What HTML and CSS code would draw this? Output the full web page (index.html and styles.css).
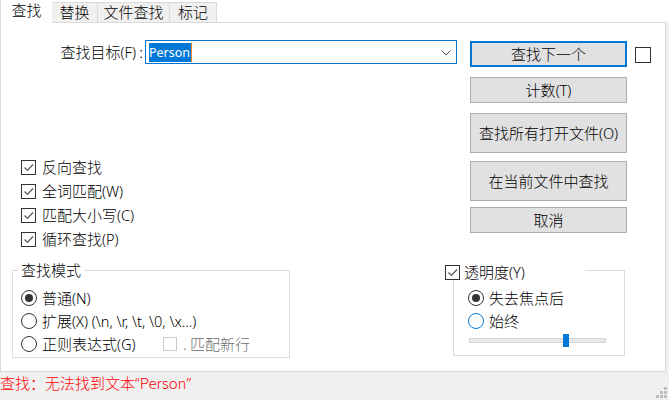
FILE: index.html
```html
<!DOCTYPE html>
<html lang="zh-CN">
<head>
<meta charset="utf-8">
<title>查找</title>
<link rel="stylesheet" href="styles.css">
</head>
<body>
<div class="tabs">
  <div class="tab active">查找</div>
  <div class="tab w46">替换</div>
  <div class="tab w72">文件查找</div>
  <div class="tab w47">标记</div>
</div>
<div class="main">
  <div class="panel">
    <div class="top">
      <div class="left">
        <div class="find-row">
          <label class="find-label">查找目标<span class="k">(F)</span> :</label>
          <div class="combo">
            <span class="sel">Person</span><span class="caret"></span>
            <svg class="chev" width="10" height="6" viewBox="0 0 10 6"><path d="M0.5 0.5 L5 5 L9.5 0.5" fill="none" stroke="#555" stroke-width="1"/></svg>
          </div>
        </div>
        <div class="checks">
          <div class="chk"><span class="box"><svg width="13" height="13" viewBox="0 0 13 13"><path d="M2.5 6.5 L5.5 9.5 L11 3.5" fill="none" stroke="#555" stroke-width="1.2"/></svg></span>反向查找</div>
          <div class="chk"><span class="box"><svg width="13" height="13" viewBox="0 0 13 13"><path d="M2.5 6.5 L5.5 9.5 L11 3.5" fill="none" stroke="#555" stroke-width="1.2"/></svg></span>全词匹配<span class="k">(W)</span></div>
          <div class="chk"><span class="box"><svg width="13" height="13" viewBox="0 0 13 13"><path d="M2.5 6.5 L5.5 9.5 L11 3.5" fill="none" stroke="#555" stroke-width="1.2"/></svg></span>匹配大小写<span class="k">(C)</span></div>
          <div class="chk"><span class="box"><svg width="13" height="13" viewBox="0 0 13 13"><path d="M2.5 6.5 L5.5 9.5 L11 3.5" fill="none" stroke="#555" stroke-width="1.2"/></svg></span>循环查找<span class="k">(P)</span></div>
        </div>
      </div>
      <div class="right">
        <div class="btn-row">
          <div class="btn default">查找下一个</div>
          <span class="box big"></span>
        </div>
        <div class="btn b2">计数<span class="k">(T)</span></div>
        <div class="btn b3 tall">查找所有打开文件<span class="k">(O)</span></div>
        <div class="btn b4 tall">在当前文件中查找</div>
        <div class="btn b5">取消</div>
      </div>
    </div>
    <div class="bottom">
      <div class="group mode">
        <div class="legend">查找模式</div>
        <div class="radio-row"><span class="radio on"></span>普通<span class="k">(N)</span></div>
        <div class="radio-row"><span class="radio"></span>扩展<span class="k">(X) (\n, \r, \t, \0, \x...)</span></div>
        <div class="radio-row"><span class="radio"></span><span class="rx-label">正则表达式<span class="k">(G)</span></span><span class="box dis"></span><span class="dis-text">. 匹配新行</span></div>
      </div>
      <div class="group trans">
        <div class="legend chk-legend"><span class="box"><svg width="13" height="13" viewBox="0 0 13 13"><path d="M2.5 6.5 L5.5 9.5 L11 3.5" fill="none" stroke="#555" stroke-width="1.2"/></svg></span>透明度<span class="k">(Y)</span></div>
        <div class="radio-row"><span class="radio on"></span>失去焦点后</div>
        <div class="radio-row"><span class="radio focus"></span>始终</div>
        <div class="slider"><span class="thumb"></span></div>
      </div>
    </div>
  </div>
  <div class="edge"></div>
</div>
<div class="status">
  <span class="msg">查找：无法找到文本<span class="q">“</span>Person<span class="q">”</span></span>
  <svg class="grip" width="11" height="11" viewBox="0 0 11 11">
    <rect x="8" y="0" width="3" height="3" fill="#bdbdbd"/>
    <rect x="4" y="4" width="3" height="3" fill="#bdbdbd"/>
    <rect x="8" y="4" width="3" height="3" fill="#bdbdbd"/>
    <rect x="0" y="8" width="3" height="3" fill="#bdbdbd"/>
    <rect x="4" y="8" width="3" height="3" fill="#bdbdbd"/>
    <rect x="8" y="8" width="3" height="3" fill="#bdbdbd"/>
  </svg>
</div>
</body>
</html>
```

FILE: styles.css
```css
html, body {
  margin: 0;
  padding: 0;
}
body {
  width: 669px;
  height: 400px;
  overflow: hidden;
  background: #f0f0f0;
  font-family: "Noto Sans CJK SC", sans-serif;
  font-size: 15px;
  font-weight: 300;
  color: #000;
}
.k {
  font-family: "Noto Sans", "Noto Sans CJK SC", sans-serif;
  font-size: 14.5px;
  font-weight: 300;
}

/* tabs */
.tabs {
  display: flex;
  align-items: flex-end;
  height: 22px;
  background: #fff;
}
.tab {
  box-sizing: border-box;
  height: 20px;
  border: 1px solid #d9d9d9;
  border-bottom: none;
  background: #f0f0f0;
  line-height: 18px;
  text-align: center;
  margin-left: -1px;
}
.tab.active {
  width: 52px;
  height: 23px;
  margin-left: 0;
  margin-bottom: -1px;
  background: #fff;
  border: none;
  border-left: 1px solid #d9d9d9;
  position: relative;
  z-index: 1;
  line-height: 20px;
}
.w46 { width: 47px; }
.w72 { width: 73px; }
.w47 { width: 48px; }

/* main */
.main {
  display: flex;
  height: 350px;
}
.panel {
  width: 666px;
  box-sizing: border-box;
  border: 1px solid #d9d9d9;
  background: #fff;
}
.edge {
  flex: 1;
  background: #f0f0f0;
}
.top {
  display: flex;
  height: 240px;
}
.left {
  width: 469px;
}
.find-row {
  display: flex;
  align-items: center;
  margin-top: 17px;
  height: 24px;
}
.find-label {
  width: 142px;
  text-align: right;
  line-height: 20px;
}
.combo {
  margin-left: 2px;
  width: 312px;
  height: 24px;
  box-sizing: border-box;
  border: 1px solid #0078d7;
  display: flex;
  align-items: center;
  padding-left: 3px;
  position: relative;
}
.sel {
  background: #0078d7;
  color: #fff;
  font-family: "Noto Sans", sans-serif;
  font-size: 12.5px;
  font-weight: 400;
  line-height: 19px;
  padding: 0 1px 0 0;
}
.caret {
  width: 1px;
  height: 19px;
  background: #f08a24;
}
.chev {
  position: absolute;
  right: 5px;
  top: 9px;
}

.checks {
  margin-top: 91px;
  padding-left: 20px;
}
.chk {
  display: flex;
  align-items: center;
  height: 24px;
  line-height: 20px;
}
.box {
  box-sizing: border-box;
  width: 15px;
  height: 15px;
  border: 1px solid #333;
  background: #fff;
  display: inline-flex;
  align-items: center;
  justify-content: center;
  flex: none;
}
.chk .box {
  margin-right: 6px;
}

/* right buttons */
.right {
  padding-top: 18px;
}
.btn-row {
  display: flex;
  align-items: center;
}
.btn {
  box-sizing: border-box;
  width: 157px;
  height: 26px;
  background: #e1e1e1;
  border: 1px solid #adadad;
  display: flex;
  align-items: center;
  justify-content: center;
  line-height: 20px;
}
.btn.default {
  border: 2px solid #0078d7;
}
.box.big {
  width: 16px;
  height: 16px;
  margin-left: 8px;
  margin-top: 2px;
}
.b2 { margin-top: 10px; }
.b3 { margin-top: 10px; }
.b4 { margin-top: 8px; }
.b5 { margin-top: 6px; }
.tall { height: 40px; }

/* bottom groups */
.bottom {
  display: flex;
  padding-top: 7px;
}
.group {
  box-sizing: border-box;
  border: 1px solid #dcdcdc;
  position: relative;
  padding-top: 15px;
}
.mode {
  margin-left: 11px;
  width: 278px;
  height: 88px;
  padding-left: 8px;
}
.legend {
  position: absolute;
  top: -11px;
  left: 5px;
  padding: 0 3px;
  background: #fff;
  line-height: 20px;
}
.radio-row {
  display: flex;
  align-items: center;
  height: 23px;
  line-height: 20px;
}
.radio {
  box-sizing: border-box;
  width: 16px;
  height: 16px;
  border: 1px solid #333;
  border-radius: 50%;
  background: #fff;
  margin-right: 5px;
  display: inline-flex;
  align-items: center;
  justify-content: center;
  flex: none;
}
.radio.on::after {
  content: "";
  width: 8px;
  height: 8px;
  border-radius: 50%;
  background: #333;
}
.radio.focus {
  border-color: #0078d7;
}
.rx-label {
  width: 121px;
}
.box.dis {
  width: 14px;
  height: 14px;
  border-color: #cccccc;
  margin-right: 6px;
}
.dis-text {
  color: #6d6d6d;
}

.trans {
  margin-left: 163px;
  width: 172px;
  height: 86px;
  padding-left: 14px;
}
.chk-legend {
  top: -7px;
  left: -9px;
  width: 140px;
  height: 16px;
  padding: 0;
  display: flex;
  align-items: center;
}
.chk-legend .box {
  margin-right: 4px;
}
.slider {
  position: relative;
  margin-top: 6px;
  margin-left: 1px;
  width: 137px;
  height: 5px;
  box-sizing: border-box;
  background: #e7eaea;
  border: 1px solid #d6d6d6;
}
.thumb {
  position: absolute;
  left: 93px;
  top: -5px;
  width: 6px;
  height: 13px;
  background: #0078d7;
}

/* status */
.status {
  display: flex;
  height: 28px;
  background: #f0f0f0;
}
.msg {
  color: #ff0000;
  line-height: 22px;
}
.q {
  font-family: "Noto Sans", sans-serif;
}
.grip {
  margin-left: auto;
  margin-top: 15px;
  margin-right: 2px;
}
```
